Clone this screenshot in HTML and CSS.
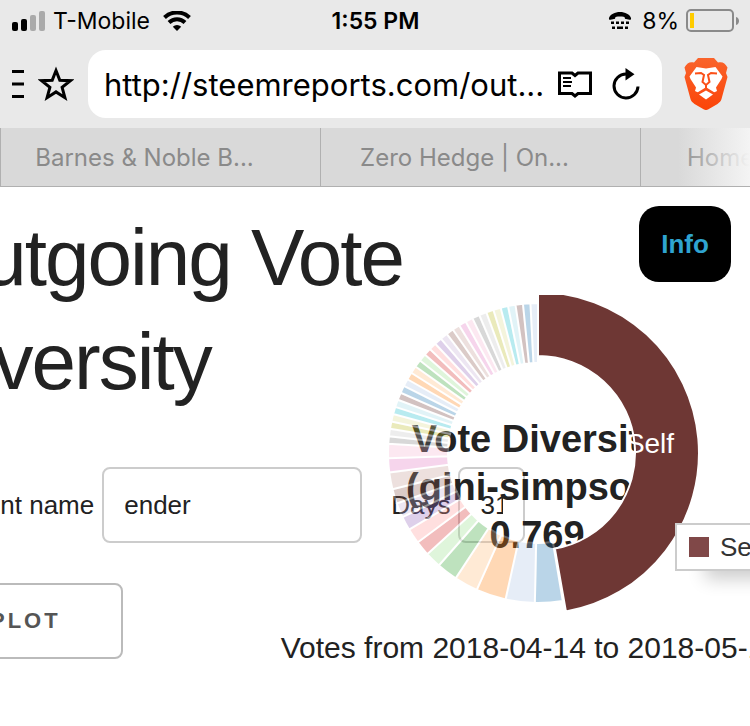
FILE: index.html
```html
<!doctype html>
<html lang="en">
	<head>
		<meta charset="utf-8">
		<title>Outgoing Vote Diversity</title>

		<link rel="stylesheet" href="styles.css">
	</head>
	<body>
		<header class="browser">
			<div class="status">
				<div class="carrier">
					<svg width="34" height="20" viewBox="0 0 34 20" aria-hidden="true">
						<rect x="0" y="11" width="6" height="9" rx="2"/>
						<rect x="9" y="8" width="6" height="12" rx="2"/>
						<rect class="off" x="18" y="4" width="6" height="16" rx="2"/>
						<rect class="off" x="27" y="0" width="6" height="20" rx="2"/>
					</svg>
					<span>T-Mobile</span>
					<svg width="28" height="20" viewBox="0 0 28 20" aria-hidden="true">
						<path d="M14 20l-4.200-4.200a6 6 0 0 1 8.400 0z"/>
						<path class="wave" d="M6 11.500a11.500 11.500 0 0 1 16 0M1.500 6.500a18 18 0 0 1 25 0"/>
					</svg>
				</div>
				<time class="clock">1:55 PM</time>
				<div class="power">
					<svg width="24" height="18" viewBox="0 0 24 18" aria-hidden="true">
						<path d="M1 6C2 2.500 7 0 12 0s10 2.500 11 6c.300 1.500-.500 2-1.500 1.800l-3.500-.700c-1-.200-1.300-.700-1.300-1.600 0-.600-1.700-1-4.700-1s-4.700.400-4.700 1c0 .900-.300 1.400-1.300 1.600l-3.500.700C1.500 8 .700 7.500 1 6z"/>
						<path d="M3 9.500h3v2.500H3zM8 9.500h3v2.500H8zM13 9.500h3v2.500h-3zM18 9.500h3v2.500h-3zM4 14.500h3V17H4zM9 14.500h6V17H9zM17 14.500h3V17h-3z"/>
					</svg>
					<span>8%</span>
					<svg width="53" height="24" viewBox="0 0 53 24" aria-hidden="true">
						<rect class="shell" x="1" y="1" width="46" height="21" rx="4"/>
						<rect class="charge" x="4" y="4" width="4" height="15"/>
						<path class="tip" d="M50 8c4 1 4 7 0 8z"/>
					</svg>
				</div>
			</div>

			<div class="toolbar">
				<button class="icon" aria-label="Menu">
					<svg width="12" height="28" viewBox="0 0 12 28"><path d="M0 1.500h12M0 14h12M0 26.500h12" stroke="#000" stroke-width="3"/></svg>
				</button>
				<button class="icon" aria-label="Bookmark">
					<svg width="36" height="36" viewBox="0 0 36 36"><path d="M18 4.500l3.800 9.700 10.600.500-8.300 6.600 2.800 10.400L18 25.900l-8.900 5.800 2.800-10.400-8.300-6.600 10.600-.500z" fill="none" stroke="#000" stroke-width="3"/></svg>
				</button>
				<div class="address">
					<input type="text" aria-label="Address" value="http://steemreports.com/out...">
					<button class="icon" aria-label="Reader view">
						<svg width="34" height="28" viewBox="0 0 34 28">
							<path d="M1.500 3h12.500l3 2.500 3-2.500h12.500v20.500H20l-3 2.500-3-2.500H1.500z" fill="none" stroke="#000" stroke-width="3"/>
							<path d="M5 8h8M5 12h9M5 16h8" stroke="#000" stroke-width="2"/>
						</svg>
					</button>
					<button class="icon reload" aria-label="Reload">
						<svg width="28" height="32" viewBox="0 0 28 32">
							<path d="M26 18.500a12 12 0 1 1-12-12.500" fill="none" stroke="#000" stroke-width="3"/>
							<path d="M13.500 0l9 6.200-9 6.200z"/>
						</svg>
					</button>
				</div>
				<button class="icon" aria-label="Brave shields">
					<svg width="44" height="52" viewBox="0 0 44 52">
						<defs>
							<linearGradient id="flame" x1="0" y1="0" x2="0" y2="1">
								<stop offset="0" stop-color="#f9642c"/>
								<stop offset="1" stop-color="#fb4408"/>
							</linearGradient>
						</defs>
						<path fill="url(#flame)" d="M14 0h16l4 4.500c4-1 7 0 9.500 5L42 15l1.500 4-6 22c-.500 2-2 3.500-4 5L24 51.500c-1.300.700-2.700.700-4 0L10.500 46c-2-1.500-3.500-3-4-5L.500 19 2 15 .500 9.500C3 4.500 6 3.500 10 4.500z"/>
						<path fill="#fff" d="M12.500 9l9.500 1.500L31.500 9l7 9.500-1 2.500-5.500 8.500 1 3.500-4 2-5-4-2-.500-2 .500-5 4-4-2 1-3.500L6.500 21l-1-2.500z"/>
						<path fill="#fff" d="M22 32.500l7 4-7 5-7-5z"/>
						<path fill="none" stroke="#fb5019" stroke-width="2" d="M11 15.500l6-.500 3 2-1.500 7 3.500 3 3.500-3-1.500-7 3-2 6 .500M22 27v3.500M13.500 35.500L22 30.500l8.500 5"/>
					</svg>
				</button>
			</div>

			<nav class="tabs">
				<a class="tab" href="#">Barnes &amp; Noble B...</a>
				<a class="tab" href="#">Zero Hedge | On...</a>
				<a class="tab" href="#">Home | Steemit...</a>
			</nav>
		</header>

		<main class="report">
			<button class="info">Info</button>

			<h1>Outgoing Vote<br>Diversity</h1>

			<form class="query">
				<div class="fields">
					<label for="account">Account name</label>
					<input id="account" class="account" type="text" value="ender">
					<label for="days" class="days-label">Days</label>
					<input id="days" class="days" type="text" value="31">
				</div>
				<div class="actions">
					<button class="plot" type="button">PLOT</button>
					<p class="range">Votes from 2018-04-14 to 2018-05-14</p>
				</div>
			</form>

			<figure class="chart">
				<figcaption class="chart-title">Vote Diversity<br>(gini-simpson)<br>0.769</figcaption>
				<svg id="donut" width="322" height="320" viewBox="0 0 322 320">
					<g id="slices"></g>
					<text class="slice-label" x="272" y="158">Self</text>
				</svg>
				<div class="tooltip"><span class="swatch"></span>Self</div>
			</figure>
		</main>

		<script src="chart.js"></script>
	</body>
</html>
```

FILE: styles.css
```css
* {
	box-sizing: border-box;
}

body {
	margin: 0;
	overflow-x: hidden;
	background: #fff;
	color: #222;
	font-family: "Liberation Sans", Arial, Helvetica, sans-serif;
	font-size: 26px;
}

	button,
	input {
		margin: 0;
		font-family: inherit;
	}

/* browser bars */

.browser {
	background: #e9e9e9;
	color: #000;
	font-family: Inter, "Noto Sans", sans-serif;
}

	.status {
		display: grid;
		grid-template-columns: 1fr auto 1fr;
		align-items: center;
		height: 42px;
		padding: 0 11px 0 12px;
		font-size: 23px;
	}

	.carrier,
	.power {
		display: flex;
		align-items: center;
		gap: 7px;
	}

	.carrier span {
		margin-right: 6px;
	}

	.power {
		justify-content: flex-end;
	}

	.power span {
		margin-left: 3px;
	}

	.clock {
		font-weight: 600;
	}

	.off {
		fill: #aaa;
	}

	.wave {
		fill: none;
		stroke: #000;
		stroke-width: 4;
	}

	.shell {
		fill: none;
		stroke: #8a8a8a;
		stroke-width: 2;
	}

	.charge {
		fill: #fc0;
	}

	.tip {
		fill: #8a8a8a;
	}

	.toolbar {
		display: flex;
		align-items: center;
		gap: 14px;
		padding: 8px 22px 10px 12px;
	}

	.icon {
		display: block;
		flex: none;
		padding: 0;
		border: 0;
		background: none;
	}

	.icon svg {
		display: block;
	}

	.address {
		display: flex;
		flex: 1;
		align-items: center;
		gap: 12px;
		min-width: 0;
		height: 68px;
		padding: 0 22px 0 16px;
		border-radius: 18px;
		margin-right: 8px;
		background: #fff;
	}

	.address input {
		flex: 1;
		min-width: 0;
		padding: 0;
		border: 0;
		background: none;
		color: #000;
		font-size: 31px;
	}

	.reload {
		margin-left: 8px;
	}

	.tabs {
		position: relative;
		display: flex;
		height: 59px;
		overflow: hidden;
		border-bottom: 1px solid #b0b0b0;
		background: #d9d9d9;
	}

	.tabs:after {
		content: "";
		position: absolute;
		top: 0;
		right: 0;
		bottom: 0;
		width: 72px;
		background: linear-gradient(to right, rgba(240,240,240,0), rgb(244,244,244));
	}

	.tab {
		flex: 0 0 320px;
		padding-right: 32px;
		border-left: 1px solid #b0b0b0;
		color: #8a8a8a;
		font-size: 24px;
		line-height: 59px;
		text-align: center;
		text-decoration: none;
		white-space: nowrap;
	}

/* report, panned to the right of its left edge */

.report {
	position: relative;
	padding: 19px 0 60px;
	margin-left: -78px;
}

	h1 {
		margin: 0;
		font-size: 80px;
		font-weight: 400;
		letter-spacing: -2px;
		line-height: 104px;
	}

	.info {
		float: right;
		width: 92px;
		height: 76px;
		margin-right: 19px;
		border: 0;
		border-radius: 20px;
		background: #000;
		color: #2fa4d0;
		font-size: 26px;
		font-weight: 700;
		padding: 0;
	}

	.query {
		margin: 53px 0 0 6px;
	}

	.fields {
		display: flex;
		align-items: center;
		gap: 8px;
		white-space: nowrap;
	}

	.account,
	.days {
		flex: none;
		height: 76px;
		padding: 0 20px;
		border: 2px solid #ccc;
		border-radius: 8px;
		background: #fff;
		color: #222;
		font-size: 26px;
	}

	.account {
		width: 260px;
	}

	.days {
		width: 67px;
	}

	.days-label {
		margin-left: 21px;
	}

	.actions {
		display: flex;
		align-items: flex-start;
		gap: 158px;
		margin-top: 40px;
	}

	.plot {
		flex: none;
		height: 76px;
		padding: 0 60px;
		border: 2px solid #bbb;
		border-radius: 8px;
		background: #fff;
		color: #555;
		font-size: 22px;
		font-weight: 700;
		letter-spacing: 3px;
	}

	.range {
		margin: 48px 0 0;
		font-size: 30px;
		line-height: 34px;
		white-space: nowrap;
	}

	/* the donut floats over the form */
	.chart {
		position: absolute;
		top: 108px;
		left: 456px;
		display: grid;
		margin: 0;
		pointer-events: none;
	}

	.chart-title,
	.chart svg {
		grid-area: 1 / 1;
	}

	.chart-title {
		padding: 120px 4px 0 0;
		font-size: 38px;
		font-weight: 700;
		line-height: 48px;
		text-align: center;
	}

	.chart svg {
		position: relative;
		overflow: hidden;
	}

	.slice {
		stroke: #fff;
		stroke-width: 2;
		opacity: 0.3;
	}

	.slice.active {
		opacity: 1;
	}

	.slice-label {
		fill: #fff;
		font-size: 28px;
		text-anchor: middle;
	}

	.tooltip {
		position: absolute;
		top: 228px;
		left: 297px;
		display: flex;
		align-items: center;
		gap: 11px;
		height: 48px;
		padding: 0 12px;
		border: 2px solid #ccc;
		background: #fff;
		box-shadow: 24px 14px 18px -6px rgba(0,0,0,0.2);
		color: #333;
		font-size: 26px;
	}

	.swatch {
		width: 20px;
		height: 20px;
		background: #804848;
	}
```

FILE: chart.js
```js
var CX = 160;
var CY = 158;

var colors = [
	'#1f77b4', '#aec7e8', '#ff7f0e', '#ffbb78', '#2ca02c', '#98df8a', '#d62728',
	'#ff9896', '#9467bd', '#c5b0d5', '#8c564b', '#c49c94', '#e377c2', '#f7b6d2',
	'#7f7f7f', '#c7c7c7', '#bcbd22', '#dbdb8d', '#17becf', '#9edae5', '#6e3734'
];

// end angle of each voted account, in degrees clockwise from the top
var ends = [181.2, 192.5, 204.1, 213.3, 221.4, 227.6, 233.4, 239.3, 244.7, 250.3, 256, 262.5, 268, 273.5];
var SMALL = 30;

for (var i = 1; i <= SMALL; i++) {
	ends.push(273.5 + i * (360 - 273.5) / SMALL);
}

function point(r, deg) {
	var a = deg * Math.PI / 180;
	return (CX + r * Math.sin(a)).toFixed(2) + ' ' + (CY - r * Math.cos(a)).toFixed(2);
}

function addSlice(from, to, inner, outer, color, active) {
	var path = document.createElementNS('http://www.w3.org/2000/svg', 'path');
	path.setAttribute('class', active ? 'slice active' : 'slice');
	path.setAttribute('fill', color);
	path.setAttribute('d',
		'M' + point(outer, from) +
		'A' + outer + ' ' + outer + ' 0 0 1 ' + point(outer, to) +
		'L' + point(inner, to) +
		'A' + inner + ' ' + inner + ' 0 0 0 ' + point(inner, from) + 'Z');
	document.getElementById('slices').appendChild(path);
}

var start = 170.5;

ends.forEach(function (end, n) {
	addSlice(start, end, 90, 150, colors[n % colors.length], false);
	start = end;
});

addSlice(0, 170, 97, 161, '#6e3734', true);
```
